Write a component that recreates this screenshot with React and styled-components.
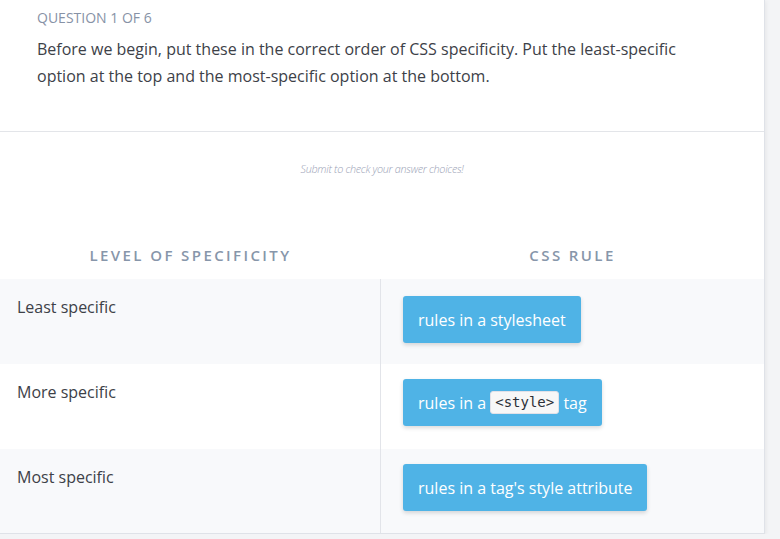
import React from "react";
import styled, { createGlobalStyle } from "styled-components";

const GlobalStyle = createGlobalStyle`
  html, body {
    margin: 0;
    padding: 0;
    background: #f3f4f6;
    font-family: "Open Sans", "Noto Sans", sans-serif;
  }
`;

function App() {
  const rows = [
    { level: "Least specific", rule: <>rules in a stylesheet</> },
    {
      level: "More specific",
      rule: (
        <>
          rules in a <Code>&lt;style&gt;</Code> tag
        </>
      )
    },
    { level: "Most specific", rule: <>rules in a tag's style attribute</> }
  ];

  return (
    <>
      <GlobalStyle />
      <Card>
        <QuestionHead>
          <QuestionLabel>Question 1 of 6</QuestionLabel>
          <QuestionText>
            Before we begin, put these in the correct order of CSS specificity. Put the least-specific
            option at the top and the most-specific option at the bottom.
          </QuestionText>
        </QuestionHead>
        <Hint>Submit to check your answer choices!</Hint>
        <Table>
          <HeadCell>Level of specificity</HeadCell>
          <HeadCell>CSS rule</HeadCell>
          {rows.map((r, i) => (
            <React.Fragment key={r.level}>
              <LevelCell $shaded={i % 2 === 0}>{r.level}</LevelCell>
              <RuleCell $shaded={i % 2 === 0} $first={i === 0}>
                <RuleChip>{r.rule}</RuleChip>
              </RuleCell>
            </React.Fragment>
          ))}
        </Table>
      </Card>
    </>
  );
}

export default App;

const Card = styled.div`
  width: 765px;
  height: 534px;
  box-sizing: border-box;
  background: #ffffff;
  border-right: 1px solid #dfe2e8;
  border-bottom: 1px solid #dfe2e8;
  box-shadow: 1px 1px 4px rgba(0, 0, 0, 0.06);
  display: flex;
  flex-direction: column;
`;

const QuestionHead = styled.div`
  padding: 9px 37px 41px 37px;
  border-bottom: 1px solid #e3e5e9;
`;

const QuestionLabel = styled.div`
  font-size: 14px;
  line-height: 18px;
  font-weight: 500;
  color: #8792a6;
  text-transform: uppercase;
`;

const QuestionText = styled.p`
  margin: 9px 0 0 0;
  font-size: 16px;
  line-height: 27px;
  color: #3d4148;
  width: 660px;
`;

const Hint = styled.div`
  margin-top: 30px;
  text-align: center;
  font-size: 10.8px;
  line-height: 14px;
  font-style: italic;
  font-weight: 300;
  color: #9aa1b5;
  letter-spacing: -0.3px;
`;

const Table = styled.div`
  margin-top: 66px;
  display: grid;
  grid-template-columns: 381px 1fr;
  grid-template-rows: 37px 85px 85px 84px;
`;

const HeadCell = styled.div`
  text-align: center;
  font-size: 15px;
  font-weight: 600;
  letter-spacing: 2.4px;
  color: #8796aa;
  text-transform: uppercase;
  padding-top: 3px;
`;

const LevelCell = styled.div`
  background: ${(p) => (p.$shaded ? "#f8f9fb" : "#ffffff")};
  border-right: 1px solid #e2e4e9;
  padding: 17px 17px 0 17px;
  font-size: 16px;
  line-height: 22px;
  color: #3d4148;
`;

const RuleCell = styled.div`
  background: ${(p) => (p.$shaded ? "#f8f9fb" : "#ffffff")};
  padding: ${(p) => (p.$first ? "17px" : "15px")} 22px 0 22px;
`;

const RuleChip = styled.div`
  display: inline-flex;
  align-items: center;
  height: 47px;
  box-sizing: border-box;
  padding: 0 15px;
  background: #4fb3e6;
  color: #ffffff;
  font-size: 16px;
  border-radius: 3px;
  box-shadow: 0 2px 4px rgba(0, 0, 0, 0.15);
  white-space: pre;
`;

const Code = styled.code`
  display: inline-block;
  padding: 1px 4px;
  background: #f7f7f7;
  border: 1px solid #e1e1e8;
  border-radius: 3px;
  color: #2b2f36;
  font-family: "DejaVu Sans Mono", "Liberation Mono", monospace;
  font-size: 14px;
  line-height: 19px;
`;
